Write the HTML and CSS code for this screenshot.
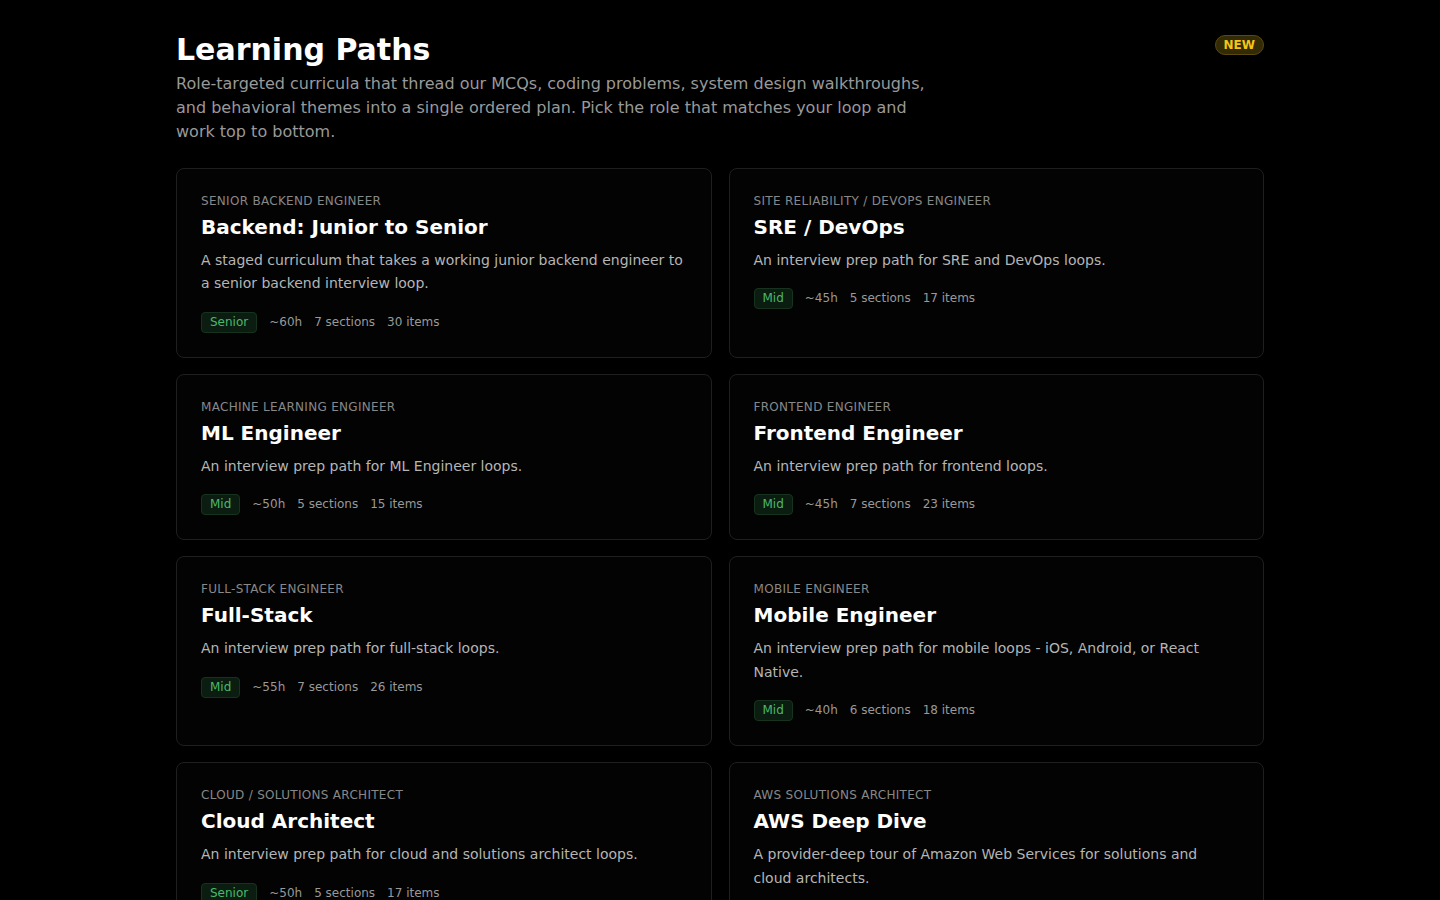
FILE: index.html
```html
<!DOCTYPE html>
<html lang="en">
<head>
    <meta charset="UTF-8">
    <meta name="viewport" content="width=device-width, initial-scale=1.0">
    <title>Learning Paths</title>
    <link rel="stylesheet" href="styles.css">
</head>
<body>
    <main class="page">
        <header class="page-header">
            <div>
                <h1>Learning Paths</h1>
                <p class="intro">Role-targeted curricula that thread our MCQs, coding problems, system design walkthroughs, and behavioral themes into a single ordered plan. Pick the role that matches your loop and work top to bottom.</p>
            </div>
            <span class="badge-new">NEW</span>
        </header>

        <div class="path-grid">
            <div class="path-card">
                <div class="path-role">Senior Backend Engineer</div>
                <h2>Backend: Junior to Senior</h2>
                <p class="path-desc">A staged curriculum that takes a working junior backend engineer to a senior backend interview loop.</p>
                <div class="path-meta">
                    <span class="level">Senior</span>
                    <span>~60h</span>
                    <span>7 sections</span>
                    <span>30 items</span>
                </div>
            </div>
            <div class="path-card">
                <div class="path-role">Site Reliability / DevOps Engineer</div>
                <h2>SRE / DevOps</h2>
                <p class="path-desc">An interview prep path for SRE and DevOps loops.</p>
                <div class="path-meta">
                    <span class="level">Mid</span>
                    <span>~45h</span>
                    <span>5 sections</span>
                    <span>17 items</span>
                </div>
            </div>
            <div class="path-card">
                <div class="path-role">Machine Learning Engineer</div>
                <h2>ML Engineer</h2>
                <p class="path-desc">An interview prep path for ML Engineer loops.</p>
                <div class="path-meta">
                    <span class="level">Mid</span>
                    <span>~50h</span>
                    <span>5 sections</span>
                    <span>15 items</span>
                </div>
            </div>
            <div class="path-card">
                <div class="path-role">Frontend Engineer</div>
                <h2>Frontend Engineer</h2>
                <p class="path-desc">An interview prep path for frontend loops.</p>
                <div class="path-meta">
                    <span class="level">Mid</span>
                    <span>~45h</span>
                    <span>7 sections</span>
                    <span>23 items</span>
                </div>
            </div>
            <div class="path-card">
                <div class="path-role">Full-Stack Engineer</div>
                <h2>Full-Stack</h2>
                <p class="path-desc">An interview prep path for full-stack loops.</p>
                <div class="path-meta">
                    <span class="level">Mid</span>
                    <span>~55h</span>
                    <span>7 sections</span>
                    <span>26 items</span>
                </div>
            </div>
            <div class="path-card">
                <div class="path-role">Mobile Engineer</div>
                <h2>Mobile Engineer</h2>
                <p class="path-desc">An interview prep path for mobile loops - iOS, Android, or React Native.</p>
                <div class="path-meta">
                    <span class="level">Mid</span>
                    <span>~40h</span>
                    <span>6 sections</span>
                    <span>18 items</span>
                </div>
            </div>
            <div class="path-card">
                <div class="path-role">Cloud / Solutions Architect</div>
                <h2>Cloud Architect</h2>
                <p class="path-desc">An interview prep path for cloud and solutions architect loops.</p>
                <div class="path-meta">
                    <span class="level">Senior</span>
                    <span>~50h</span>
                    <span>5 sections</span>
                    <span>17 items</span>
                </div>
            </div>
            <div class="path-card">
                <div class="path-role">AWS Solutions Architect</div>
                <h2>AWS Deep Dive</h2>
                <p class="path-desc">A provider-deep tour of Amazon Web Services for solutions and cloud architects.</p>
                <div class="path-meta">
                    <span class="level">Senior</span>
                    <span>~40h</span>
                    <span>6 sections</span>
                    <span>20 items</span>
                </div>
            </div>
        </div>
    </main>
</body>
</html>
```

FILE: styles.css
```css
body {
    margin: 0;
    background: #000;
    color: #fff;
    font-family: "DejaVu Sans", Verdana, sans-serif;
}
.page {
    max-width: 1088px;
    margin: 0 auto;
    padding: 33px 0 48px;
}
.page-header {
    display: flex;
    justify-content: space-between;
    align-items: flex-start;
    margin-bottom: 24px;
}
h1 {
    margin: 0 0 5px;
    font-size: 30px;
    line-height: 34px;
    font-weight: bold;
}
.intro {
    margin: 0;
    max-width: 760px;
    font-size: 16px;
    line-height: 24px;
    color: #999;
}
.badge-new {
    margin-top: 2px;
    padding: 2px 8px;
    font-size: 12px;
    line-height: 14px;
    font-weight: bold;
    color: #f5c518;
    background: #332a06;
    border: 1px solid #5a4a10;
    border-radius: 999px;
}
.path-grid {
    display: grid;
    grid-template-columns: 1fr 1fr;
    gap: 16px 17px;
}
.path-card {
    background: #030303;
    border: 1px solid #1f1f1f;
    border-radius: 8px;
    padding: 24px;
}
.path-role {
    font-size: 12px;
    line-height: 16px;
    color: #888;
    text-transform: uppercase;
    letter-spacing: 0.3px;
    margin-bottom: 4px;
}
.path-card h2 {
    margin: 0 0 7.5px;
    font-size: 20px;
    line-height: 28px;
    font-weight: bold;
}
.path-desc {
    margin: 0 0 16px;
    font-size: 14px;
    line-height: 1.7;
    color: #b5b5b5;
}
.path-meta {
    display: flex;
    align-items: center;
    gap: 12px;
    font-size: 12px;
    line-height: 15px;
    color: #999;
}
.level {
    padding: 2px 8px;
    line-height: 15px;
    color: #4cb86a;
    background: #0a1d10;
    border: 1px solid #173320;
    border-radius: 4px;
}
```
